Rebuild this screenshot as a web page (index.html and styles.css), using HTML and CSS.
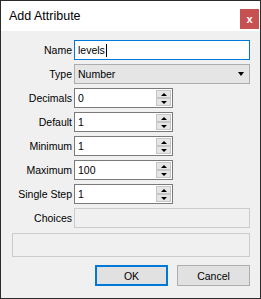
FILE: index.html
```html
<!DOCTYPE html>
<html lang="en">
<head>
    <meta charset="UTF-8">
    <title>Add Attribute</title>
    <link rel="stylesheet" href="styles.css">
</head>
<body>
    <div class="window">
        <div class="titlebar">
            <span class="title">Add Attribute</span>
            <span class="close">x</span>
        </div>

        <div class="content">
            <div class="form">
                <label>Name</label>
                <div class="field focused">levels<span class="caret"></span></div>

                <label>Type</label>
                <div class="combo">Number<span class="arrow down"></span></div>

                <label>Decimals</label>
                <div class="spin"><span class="value">0</span><span class="spin-btns"><span class="sb"><span class="arrow up"></span></span><span class="sb"><span class="arrow down"></span></span></span></div>

                <label>Default</label>
                <div class="spin"><span class="value">1</span><span class="spin-btns"><span class="sb"><span class="arrow up"></span></span><span class="sb"><span class="arrow down"></span></span></span></div>

                <label>Minimum</label>
                <div class="spin"><span class="value">1</span><span class="spin-btns"><span class="sb"><span class="arrow up"></span></span><span class="sb"><span class="arrow down"></span></span></span></div>

                <label>Maximum</label>
                <div class="spin"><span class="value">100</span><span class="spin-btns"><span class="sb"><span class="arrow up"></span></span><span class="sb"><span class="arrow down"></span></span></span></div>

                <label>Single Step</label>
                <div class="spin"><span class="value">1</span><span class="spin-btns"><span class="sb"><span class="arrow up"></span></span><span class="sb"><span class="arrow down"></span></span></span></div>

                <label>Choices</label>
                <div class="field disabled"></div>
            </div>

            <div class="preview"></div>

            <div class="buttons">
                <button class="btn default">OK</button>
                <button class="btn">Cancel</button>
            </div>
        </div>
    </div>
</body>
</html>
```

FILE: styles.css
```css
html, body {
    margin: 0;
    padding: 0;
}
body {
    font-family: "Liberation Sans", Arial, sans-serif;
    font-size: 10.5px;
    color: #000;
    background: #fff;
}
.window {
    width: 261px;
    height: 299px;
    box-sizing: border-box;
    border: 1px solid #2b2b2b;
    display: flex;
    flex-direction: column;
    background-color: #f0f0f0;
}
.titlebar {
    height: 30px;
    background: #fff;
    display: flex;
    align-items: center;
    justify-content: space-between;
    padding-left: 8px;
}
.title {
    font-size: 12.5px;
}
.close {
    width: 19px;
    height: 20px;
    margin-right: 1px;
    margin-top: 6px;
    background-color: #c75050;
    color: #fff;
    font-weight: bold;
    font-size: 11px;
    display: flex;
    align-items: center;
    justify-content: center;
    line-height: 1;
}
.content {
    padding: 9px 10px 0 10px;
}
.form {
    display: grid;
    grid-template-columns: 61px 1fr;
    column-gap: 2px;
    row-gap: 4px;
    grid-auto-rows: 20px;
}
.form label {
    text-align: right;
    display: flex;
    align-items: center;
    justify-content: flex-end;
    color: #000;
}
.field, .combo, .spin {
    box-sizing: border-box;
    border: 1px solid #7a7a7a;
    background: #fff;
    display: flex;
    align-items: center;
    padding-left: 3px;
}
.field.focused {
    border-color: #0078d7;
}
.caret {
    width: 1px;
    height: 13px;
    background: #000;
    margin-left: 1px;
}
.field.disabled {
    border-color: #cccccc;
    background: #f0f0f0;
}
.combo {
    background-color: #e5e5e5;
    border-color: #adadad;
    justify-content: space-between;
    padding-right: 5px;
}
.spin {
    width: 99px;
    justify-content: space-between;
    padding-right: 1px;
}
.spin-btns {
    display: flex;
    flex-direction: column;
    width: 15px;
    height: 16px;
}
.sb {
    flex: 1;
    box-sizing: border-box;
    background-color: #e5e5e5;
    border: 1px solid #c6c6c6;
    display: flex;
    align-items: center;
    justify-content: center;
}
.arrow {
    width: 0;
    height: 0;
    border-left: 3.5px solid transparent;
    border-right: 3.5px solid transparent;
}
.arrow.down {
    border-top: 4px solid #000;
}
.arrow.up {
    border-bottom: 4px solid #000;
}
.sb .arrow {
    border-left-width: 3px;
    border-right-width: 3px;
    border-top-width: 3px;
    border-bottom-width: 3px;
}
.sb .arrow.up {
    border-top: 0;
}
.sb .arrow.down {
    border-bottom: 0;
}
.preview {
    margin-top: 5px;
    height: 24px;
    box-sizing: border-box;
    border: 1px solid #cccccc;
    margin-left: 1px;
}
.buttons {
    display: flex;
    justify-content: flex-end;
    gap: 9px;
    margin-top: 8px;
}
.btn {
    width: 73px;
    height: 21px;
    box-sizing: border-box;
    border: 1px solid #adadad;
    background-color: #e1e1e1;
    font-family: "Liberation Sans", Arial, sans-serif;
    font-size: 10.5px;
    color: #000;
    padding: 0;
}
.btn.default {
    border: 2px solid #0078d7;
}
```
